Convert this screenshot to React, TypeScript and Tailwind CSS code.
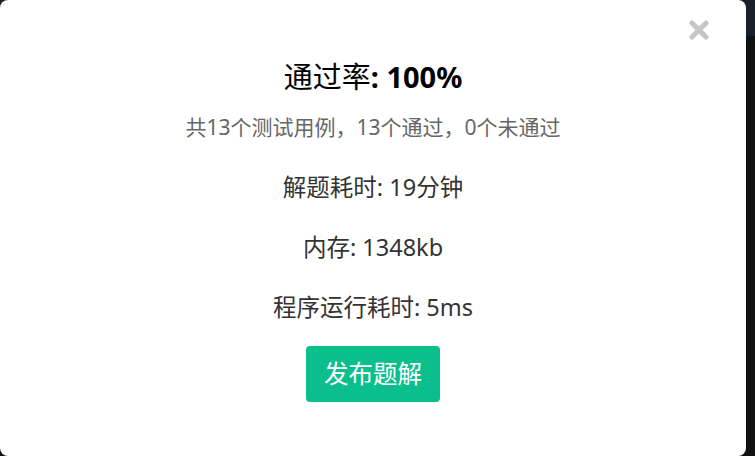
export default function App() {
    const rows = ['解题耗时: 19分钟', '内存: 1348kb', '程序运行耗时: 5ms'];

    return (
        <div
            className="relative w-[755px] h-[456px] overflow-hidden bg-[#111111]"
            style={{ fontFamily: '"Noto Sans", "Noto Sans CJK SC", sans-serif' }}>
            <div className="h-9 bg-[#18212b]" />

            <div className="absolute left-0 top-0 w-[746px] h-[456px] rounded-lg bg-white flex flex-col items-center">
                <button
                    type="button"
                    className="absolute right-[37px] top-5 w-5 h-5 text-[#c6c6c6]">
                    <svg viewBox="0 0 20 20" className="w-5 h-5">
                        <path
                            d="M3 3 L17 17 M17 3 L3 17"
                            stroke="currentColor"
                            strokeWidth="5"
                            strokeLinecap="round" />
                    </svg>
                </button>

                <h1 className="mt-[59px] text-[29px] leading-9 text-black font-normal">
                    通过率<span className="font-bold">: 100%</span>
                </h1>
                <p className="mt-[18px] text-[21px] leading-7 text-[#666666]">
                    共13个测试用例，13个通过，0个未通过
                </p>

                <div className="mt-[30px] flex flex-col items-center gap-[28px]">
                    {rows.map((row) => (
                        <div key={row} className="text-[23.5px] leading-8 text-[#333333]">
                            {row}
                        </div>
                    ))}
                </div>

                <button
                    type="button"
                    className="mt-[23px] w-[134px] h-[56px] rounded-[4px] bg-[#0bbf8c] text-white text-[24.5px]">
                    发布题解
                </button>
            </div>
        </div>
    )
}
